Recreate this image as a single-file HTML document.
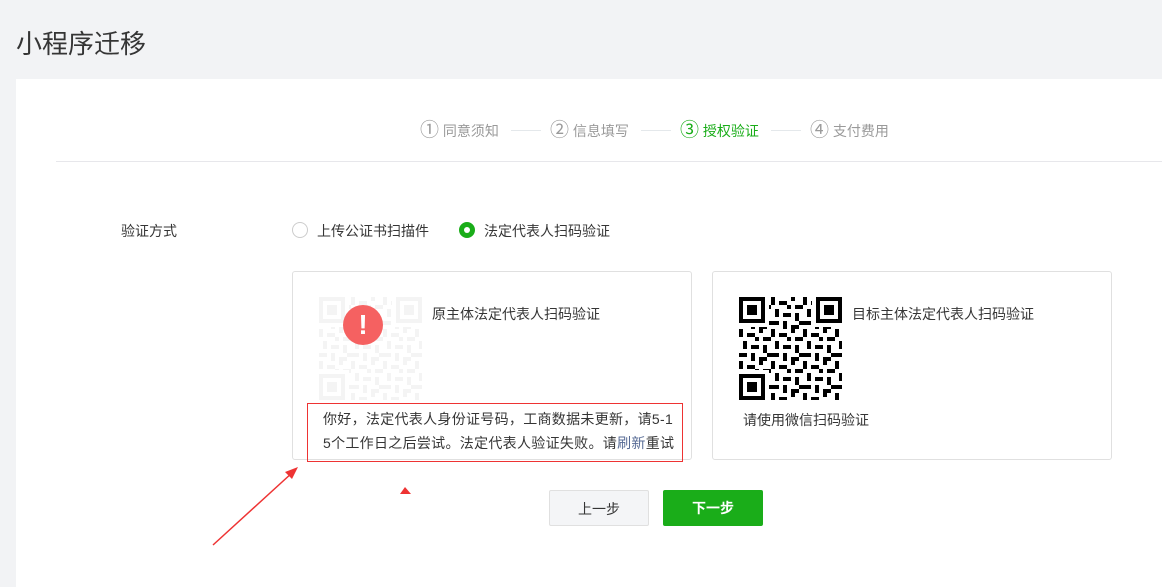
<!DOCTYPE html>
<html><head><meta charset="utf-8"><style>
*{margin:0;padding:0;box-sizing:border-box}
body{width:1162px;height:587px;background:#f2f3f5;font-family:"Liberation Sans","Noto Sans CJK SC",sans-serif;position:relative;overflow:hidden;color:#353535}
.abs{position:absolute}
h1{position:absolute;left:16px;top:24px;font-size:26px;font-weight:normal;color:#353535}
.panel{position:absolute;left:16px;top:79px;width:1146px;height:508px;background:#fff}
.steps{position:absolute;top:117px;font-size:14px;color:#9a9a9a;white-space:nowrap}
.steps span{position:absolute}
.c{font-size:19px}
.line{position:absolute;height:1px;background:#e4e8eb;width:30px;top:130px}
.card{position:absolute;top:271px;width:400px;height:189px;border:1px solid #e0e0e0;border-radius:3px;background:#fff}
.btn{position:absolute;top:490px;height:36px;width:100px;border-radius:2px;font-size:14px;text-align:center;line-height:36px}
</style></head><body>
<h1>小程序迁移</h1>
<div class="panel"></div>
<div class="abs" style="left:56px;top:161px;width:1106px;height:1px;background:#e7e7eb"></div>
<div class="steps"><span style="left:420px;top:-2px"><span class="c" style="position:static">①</span> 同意须知</span></div>
<div class="line" style="left:511px"></div>
<div class="steps"><span style="left:550px;top:-2px"><span class="c" style="position:static">②</span> 信息填写</span></div>
<div class="line" style="left:641px"></div>
<div class="steps" style="color:#1aad19"><span style="left:680px;top:-2px"><span class="c" style="position:static">③</span> 授权验证</span></div>
<div class="line" style="left:771px"></div>
<div class="steps"><span style="left:810px;top:-2px"><span class="c" style="position:static">④</span> 支付费用</span></div>

<div class="abs" style="left:121px;top:221px;font-size:14px">验证方式</div>
<div class="abs" style="left:292px;top:222px;width:16px;height:16px;border:1px solid #ccc;border-radius:50%"></div>
<div class="abs" style="left:317px;top:221px;font-size:14px">上传公证书扫描件</div>
<div class="abs" style="left:459px;top:222px;width:16px;height:16px;border:1px solid #1aad19;border-radius:50%;background:#1aad19"><div style="position:absolute;left:4px;top:4px;width:6px;height:6px;border-radius:50%;background:#fff"></div></div>
<div class="abs" style="left:484px;top:221px;font-size:14px">法定代表人扫码验证</div>

<svg width="0" height="0" style="position:absolute"><defs>
<pattern id="qp" width="32" height="32" patternUnits="userSpaceOnUse">
<rect x="0" y="0" width="4" height="8" fill="#000"/><rect x="8" y="4" width="8" height="4" fill="#000"/><rect x="20" y="0" width="4" height="4" fill="#000"/><rect x="24" y="8" width="8" height="4" fill="#000"/><rect x="4" y="12" width="4" height="8" fill="#000"/><rect x="12" y="16" width="8" height="4" fill="#000"/><rect x="24" y="16" width="4" height="8" fill="#000"/><rect x="0" y="24" width="8" height="4" fill="#000"/><rect x="12" y="24" width="4" height="8" fill="#000"/><rect x="20" y="28" width="8" height="4" fill="#000"/><rect x="16" y="8" width="4" height="4" fill="#000"/><rect x="28" y="24" width="4" height="4" fill="#000"/>
</pattern>
<g id="qr">
<rect width="103" height="103" fill="url(#qp)"/>
<g fill="#fff"><rect x="0" y="0" width="30" height="30"/><rect x="73" y="0" width="30" height="30"/><rect x="0" y="73" width="30" height="30"/></g>
<g fill="none" stroke="#000" stroke-width="4"><rect x="2" y="2" width="22" height="22"/><rect x="79" y="2" width="22" height="22"/><rect x="2" y="79" width="22" height="22"/></g>
<g fill="#000"><rect x="8" y="8" width="10" height="10"/><rect x="85" y="8" width="10" height="10"/><rect x="8" y="85" width="10" height="10"/></g>
</g></defs></svg>

<div class="card" style="left:292px"></div>
<svg class="abs" style="left:319px;top:297px;opacity:0.04" width="103" height="103"><use href="#qr"/></svg>
<div class="abs" style="left:343px;top:305px;width:40px;height:40px;border-radius:50%;background:#f56161;color:#fff;font-size:28px;font-weight:bold;text-align:center;line-height:40px">!</div>
<div class="abs" style="left:432px;top:304px;font-size:14px">原主体法定代表人扫码验证</div>
<div class="abs" style="left:307px;top:403px;width:376px;height:59px;border:1px solid #e33;"></div>
<div class="abs" style="left:323px;top:407px;font-size:14px;line-height:24px;color:#353535;white-space:nowrap;letter-spacing:0.3px">你好，法定代表人身份证号码，工商数据未更新，请5-1<br>5个工作日之后尝试。法定代表人验证失败。请<span style="color:#576b95">刷新</span>重试</div>

<div class="card" style="left:712px"></div>
<svg class="abs" style="left:739px;top:297px" width="103" height="103"><use href="#qr"/></svg>
<div class="abs" style="left:852px;top:304px;font-size:14px">目标主体法定代表人扫码验证</div>
<div class="abs" style="left:743px;top:410px;font-size:14px">请使用微信扫码验证</div>

<div class="btn" style="left:549px;background:#f4f5f7;border:1px solid #e0e0e0;color:#353535">上一步</div>
<div class="btn" style="left:663px;background:#1aad19;color:#fff;font-weight:bold">下一步</div>

<svg class="abs" style="left:0;top:0" width="1162" height="587">
<line x1="213" y1="545" x2="293" y2="472" stroke="#e33" stroke-width="1.5"/>
<polygon points="298,467 285,472 292,479" fill="#e33"/>
<polygon points="405,487 400,494 411,494" fill="#e33"/>
</svg>
</body></html>
